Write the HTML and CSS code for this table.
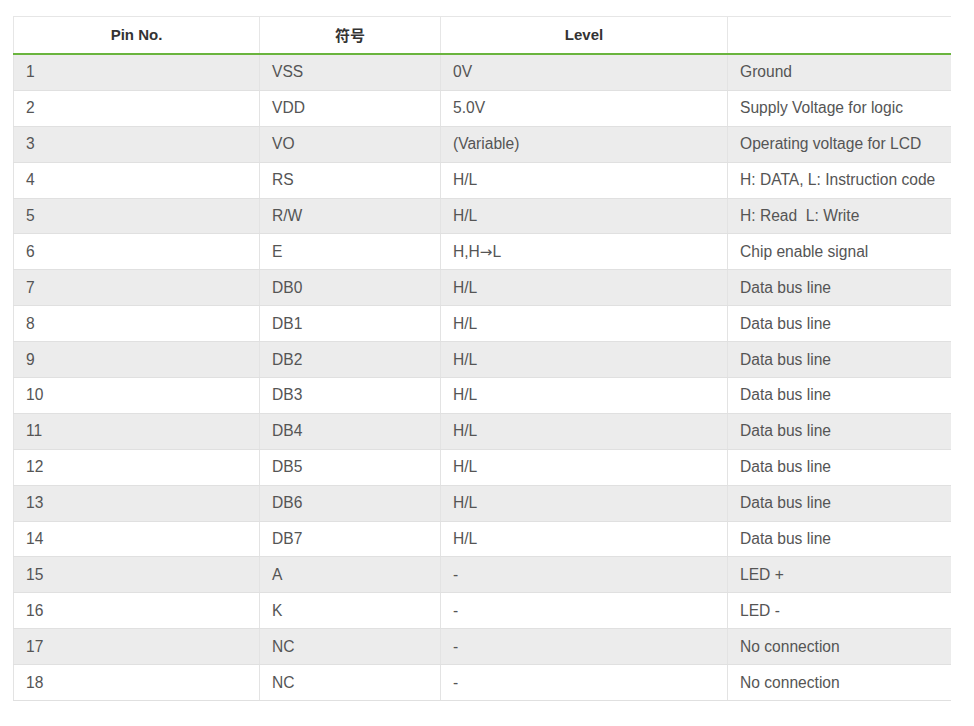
FILE: index.html
```html
<!DOCTYPE html>
<html>
<head>
<meta charset="utf-8">
<link rel="stylesheet" href="styles.css">
</head>
<body>
<div class="wrap">
<table class="pins">
<colgroup><col class="c1"><col class="c2"><col class="c3"><col class="c4"></colgroup>
<thead>
<tr><th>Pin No.</th><th>符号</th><th>Level</th><th></th></tr>
</thead>
<tbody>
<tr><td>1</td><td>VSS</td><td>0V</td><td>Ground</td></tr>
<tr><td>2</td><td>VDD</td><td>5.0V</td><td>Supply Voltage for logic</td></tr>
<tr><td>3</td><td>VO</td><td>(Variable)</td><td>Operating voltage for LCD</td></tr>
<tr><td>4</td><td>RS</td><td>H/L</td><td>H: DATA, L: Instruction code</td></tr>
<tr><td>5</td><td>R/W</td><td>H/L</td><td>H: Read&nbsp; L: Write</td></tr>
<tr><td>6</td><td>E</td><td>H,H<span class="arrow">→</span>L</td><td>Chip enable signal</td></tr>
<tr><td>7</td><td>DB0</td><td>H/L</td><td>Data bus line</td></tr>
<tr><td>8</td><td>DB1</td><td>H/L</td><td>Data bus line</td></tr>
<tr><td>9</td><td>DB2</td><td>H/L</td><td>Data bus line</td></tr>
<tr><td>10</td><td>DB3</td><td>H/L</td><td>Data bus line</td></tr>
<tr><td>11</td><td>DB4</td><td>H/L</td><td>Data bus line</td></tr>
<tr><td>12</td><td>DB5</td><td>H/L</td><td>Data bus line</td></tr>
<tr><td>13</td><td>DB6</td><td>H/L</td><td>Data bus line</td></tr>
<tr><td>14</td><td>DB7</td><td>H/L</td><td>Data bus line</td></tr>
<tr><td>15</td><td>A</td><td>-</td><td>LED +</td></tr>
<tr><td>16</td><td>K</td><td>-</td><td>LED -</td></tr>
<tr><td>17</td><td>NC</td><td>-</td><td>No connection</td></tr>
<tr><td>18</td><td>NC</td><td>-</td><td>No connection</td></tr>
</tbody>
</table>
</div>
</body>
</html>
```
FILE: styles.css
```css
html, body {
  margin: 0;
  padding: 0;
  background: #fff;
}
.wrap {
  padding: 16px 0 0 13px;
}
.pins {
  width: 937px;
  border-collapse: collapse;
  table-layout: fixed;
  font-family: "Liberation Sans", Arial, "Noto Sans CJK SC", sans-serif;
  font-size: 15.6px;
  color: #555;
}
.c1 { width: 246px; }
.c2 { width: 181px; }
.c3 { width: 287px; }
.c4 { width: 223px; }
.pins th {
  height: 35px;
  padding: 0 12px 1px;
  font-size: 15px;
  font-weight: bold;
  color: #333;
  text-align: center;
  border-top: 1px solid #e6e6e6;
  border-left: 1px solid #e6e6e6;
  border-bottom: 2px solid #6ab43e;
  background: #fff;
}
.pins td {
  height: 34.9px;
  padding: 0 12px;
  text-align: left;
  border-left: 1px solid #e3e3e3;
  border-bottom: 1px solid #e0e0e0;
  white-space: nowrap;
}
.pins tbody tr:nth-child(odd) td {
  background: #ececec;
}
.arrow {
  font-family: "DejaVu Sans", sans-serif;
  font-size: 15px;
}
```
